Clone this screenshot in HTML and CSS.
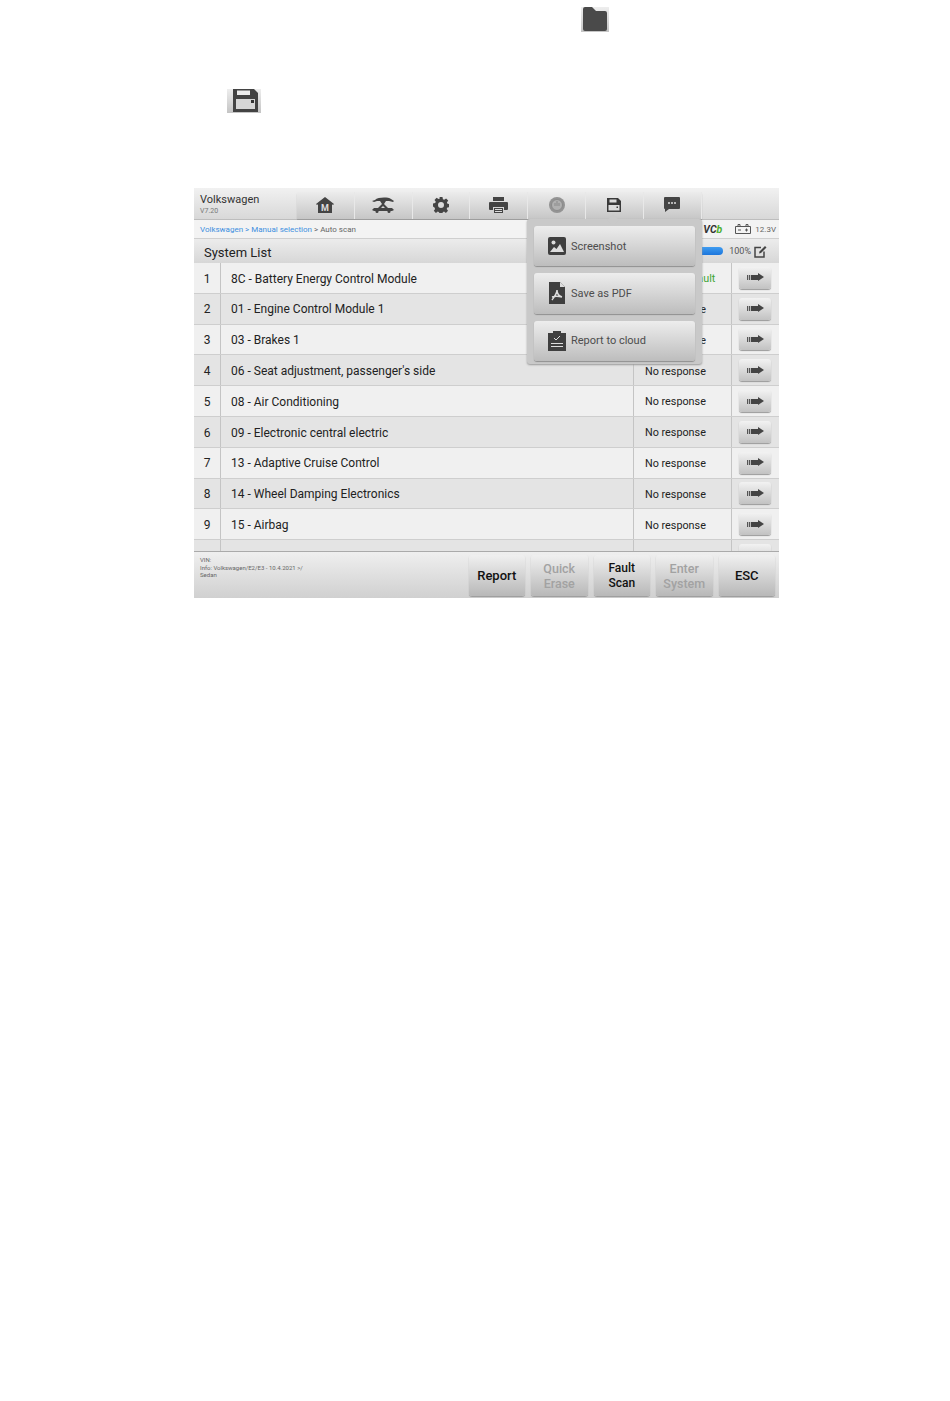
FILE: index.html
```html
<!DOCTYPE html>
<html lang="en-US">
  <head>
    <meta charset="UTF-8" />
    <meta name="viewport" content="width=device-width, initial-scale=1" />
    <title>System List</title>
    <link rel="stylesheet" href="styles.css">
  </head>
  <body>
    <!-- Icons from the manual text above the screenshot -->
    <div class="chip chip-folder">
      <svg viewBox="0 0 28 25" width="28" height="25"><path fill="#4a4a4a" d="M4 0h7l4 4h9a2 2 0 0 1 2 2v16a2 2 0 0 1-2 2H4a2 2 0 0 1-2-2V2a2 2 0 0 1 2-2z"/></svg>
    </div>
    <div class="chip chip-save">
      <svg viewBox="0 0 34 24" width="34" height="24"><path fill="#434343" d="M6 0h21l4 4v19H6z"/><rect x="10" y="1.500" width="13" height="4.500" fill="#ececec"/><rect x="9" y="10" width="19" height="10" fill="#d6d6d6"/><rect x="24" y="11" width="3" height="3" fill="#333"/></svg>
    </div>

    <div id="app">
      <div id="topbar">
        <div class="brand">
          <div class="brand-name">Volkswagen</div>
          <div class="brand-ver">V7.20</div>
        </div>
        <div class="tabs">
          <div class="tab">
            <svg viewBox="0 0 18 16" width="18" height="16"><path fill="#444" d="M9 0l9 7-1 1-1-.8V16H2V7.2L1 8 0 7z"/><text x="9" y="14" class="icon-m">M</text></svg>
          </div>
          <div class="tab">
            <svg viewBox="0 0 22 17" width="22" height="17"><path fill="#444" d="M3 4c3-3 13-3 16-1l3 2-1 1-4-1H5L2 6 0 5zM8 5h6l-2 3 4 4h-3l-2-2-2 2H6l4-4zM2 12h18l2 2-2 1H2l-2-1z"/><circle cx="5" cy="15.500" r="1.500" fill="#444"/><circle cx="17" cy="15.500" r="1.500" fill="#444"/></svg>
          </div>
          <div class="tab">
            <svg viewBox="0 0 16 16" width="16" height="16"><path fill="#444" fill-rule="evenodd" d="M6.500 0h3l.4 2.200 1.300.6 1.900-1.300 2.100 2.100-1.300 1.900.6 1.300 2 .4v3l-2.200.4-.6 1.300 1.300 1.900-2.100 2.100-1.900-1.300-1.300.6-.2 2.200h-3l-.4-2.200-1.300-.6-1.900 1.300-2.100-2.100 1.300-1.900-.6-1.300L0 9.500v-3l2.200-.4.6-1.300-1.300-1.900 2.100-2.100 1.900 1.300 1.300-.6zM8 5a3 3 0 1 0 0 6 3 3 0 0 0 0-6z"/></svg>
          </div>
          <div class="tab">
            <svg viewBox="0 0 19 16" width="19" height="16"><path fill="#444" d="M4 0h11v4H4zM1 5h17a1 1 0 0 1 1 1v6a1 1 0 0 1-1 1h-3v-3H4v3H1a1 1 0 0 1-1-1V6a1 1 0 0 1 1-1z"/><rect x="5" y="11" width="9" height="5" fill="#444"/><rect x="6" y="12" width="7" height="1" fill="#ddd"/><rect x="6" y="14" width="7" height="1" fill="#ddd"/></svg>
          </div>
          <div class="tab">
            <svg viewBox="0 0 16 16" width="16" height="16"><circle cx="8" cy="8" r="8" fill="#939393"/><circle cx="8" cy="8" r="5.500" fill="#b0b0b0" stroke="#8a8a8a"/><path d="M8 4v5M6 6v3M10 6v3" stroke="#8a8a8a" fill="none"/></svg>
          </div>
          <div class="tab">
            <svg viewBox="0 0 14 14" width="14" height="14"><path fill="#3a3a3a" d="M0 0h11l3 3v11H0z"/><rect x="2.500" y="1.500" width="7" height="3" fill="#ddd"/><rect x="1.500" y="7" width="11" height="5.500" fill="#ddd"/><rect x="9.500" y="8.500" width="1.500" height="1.500" fill="#3a3a3a"/></svg>
          </div>
          <div class="tab">
            <svg viewBox="0 0 16 15" width="16" height="15"><path fill="#444" d="M1 0h14a1 1 0 0 1 1 1v10a1 1 0 0 1-1 1H5l-4 3v-3a1 1 0 0 1-1-1V1a1 1 0 0 1 1-1z"/><circle cx="5" cy="6" r="1" fill="#ddd"/><circle cx="8" cy="6" r="1" fill="#ddd"/><circle cx="11" cy="6" r="1" fill="#ddd"/></svg>
          </div>
        </div>
      </div>

      <div id="crumbs">
        <div class="crumb-path"><span class="crumb-link">Volkswagen &gt; Manual selection</span> &gt; Auto scan</div>
        <div class="vci">
          <span class="vci-label">VC<span class="vci-b">b</span></span>
          <svg viewBox="0 0 16 10" width="16" height="10"><path fill="none" stroke="#555" d="M.5 2.500h15v7H.5zM3 2.500V.5h2v2M11 2.500V.5h2v2"/><path stroke="#555" d="M3 6h3M10 6h3M11.500 4.500v3"/></svg>
          <span>12.3V</span>
        </div>
      </div>

      <div id="list-head">
        <div class="list-title">System List</div>
        <div class="progress">
          <div class="progress-track"><div class="progress-fill"></div></div>
          <span>100%</span>
          <svg viewBox="0 0 13 13" width="13" height="13"><path fill="none" stroke="#444" stroke-width="1.500" d="M10 6.500V12H1V2.500h6"/><path fill="#444" d="M5 8.500l.5-2L11 1l1.500 1.500L7 8z"/></svg>
        </div>
      </div>

      <div id="list">
        <div class="row"><div class="num">1</div><div class="name">8C - Battery Energy Control Module</div><div class="status ok">Without a fault</div><div class="go"><button class="arrow-btn"><span class="arrow"></span></button></div></div>
        <div class="row"><div class="num">2</div><div class="name">01 - Engine Control Module 1</div><div class="status">No response</div><div class="go"><button class="arrow-btn"><span class="arrow"></span></button></div></div>
        <div class="row"><div class="num">3</div><div class="name">03 - Brakes 1</div><div class="status">No response</div><div class="go"><button class="arrow-btn"><span class="arrow"></span></button></div></div>
        <div class="row"><div class="num">4</div><div class="name">06 - Seat adjustment, passenger's side</div><div class="status">No response</div><div class="go"><button class="arrow-btn"><span class="arrow"></span></button></div></div>
        <div class="row"><div class="num">5</div><div class="name">08 - Air Conditioning</div><div class="status">No response</div><div class="go"><button class="arrow-btn"><span class="arrow"></span></button></div></div>
        <div class="row"><div class="num">6</div><div class="name">09 - Electronic central electric</div><div class="status">No response</div><div class="go"><button class="arrow-btn"><span class="arrow"></span></button></div></div>
        <div class="row"><div class="num">7</div><div class="name">13 - Adaptive Cruise Control</div><div class="status">No response</div><div class="go"><button class="arrow-btn"><span class="arrow"></span></button></div></div>
        <div class="row"><div class="num">8</div><div class="name">14 - Wheel Damping Electronics</div><div class="status">No response</div><div class="go"><button class="arrow-btn"><span class="arrow"></span></button></div></div>
        <div class="row"><div class="num">9</div><div class="name">15 - Airbag</div><div class="status">No response</div><div class="go"><button class="arrow-btn"><span class="arrow"></span></button></div></div>
        <div class="row"><div class="num"></div><div class="name"></div><div class="status"></div><div class="go"><button class="arrow-btn"></button></div></div>
      </div>

      <div id="footer">
        <div class="vin">VIN:<br>Info: Volkswagen/E2/E3 - 10.4.2021 &gt;/<br>Sedan</div>
        <div class="actions">
          <button class="action">Report</button>
          <button class="action off">Quick Erase</button>
          <button class="action tight">Fault Scan</button>
          <button class="action off">Enter System</button>
          <button class="action">ESC</button>
        </div>
      </div>

      <!-- Save menu opened from the toolbar -->
      <div id="save-menu">
        <div class="menu-tip"></div>
        <div class="menu-item">
          <svg viewBox="0 0 18 18" width="18" height="18"><rect width="18" height="18" rx="2" fill="#3f3f3f"/><circle cx="5.500" cy="5.500" r="2" fill="#ddd"/><path fill="#ddd" d="M2 15l4-5 2.500 2L12 7l4 8z"/></svg>
          <span>Screenshot</span>
        </div>
        <div class="menu-item">
          <svg viewBox="0 0 18 22" width="18" height="22"><path fill="#3f3f3f" d="M1 0h11l5 5v17H1z"/><path fill="#ddd" d="M12 0l5 5h-5z"/><path fill="none" stroke="#ddd" stroke-width="1.500" d="M9 8c0 4-3 7-5 10M9 8c0 4 2 6 5 7M4 15c3-1 6-1 10 0"/></svg>
          <span>Save as PDF</span>
        </div>
        <div class="menu-item">
          <svg viewBox="0 0 18 20" width="18" height="20"><path fill="#3f3f3f" d="M0 2h5V0h8v2h5v18H0z"/><path fill="none" stroke="#ddd" d="M6 7l2 2 4-4M3 12.500h12M3 15.500h12"/></svg>
          <span>Report to cloud</span>
        </div>
      </div>
    </div>
  </body>
</html>
```

FILE: styles.css
```css
body {
  margin: 0;
  padding: 0;
  background-color: #fff;
  color: #222;
  font-family: Roboto, "Liberation Sans", sans-serif;
}

button {
  font-family: inherit;
}

.chip {
  display: flex;
  background: linear-gradient(#eee, #c4c4c4);
}

.chip-folder {
  width: 28px;
  height: 25px;
  margin: 7px 0 0 581px;
}

.chip-save {
  width: 34px;
  height: 24px;
  margin: 57px 0 0 227px;
}

#app {
  position: relative;
  display: flex;
  flex-direction: column;
  width: 585px;
  height: 410px;
  margin: 75px 0 0 194px;
  background-color: #efefef;
}

/* Top bar */
#topbar {
  display: flex;
  height: 32px;
  background: linear-gradient(#f1f1f1, #d8d8d8);
  border-bottom: 1px solid #bdbdbd;
  box-sizing: border-box;
}

.brand {
  width: 103px;
  padding: 5px 0 0 6px;
  box-sizing: border-box;
}

.brand-name {
  font-size: 11px;
  line-height: 14px;
  color: #333;
}

.brand-ver {
  font-size: 7px;
  line-height: 9px;
  color: #777;
}

.tabs {
  display: flex;
  margin-top: 4px;
  height: 27px;
  box-shadow: 0 1px 1px #999;
  border-radius: 3px 3px 0 0;
}

.tab {
  display: flex;
  align-items: center;
  justify-content: center;
  width: 57.800px;
  padding-bottom: 2px;
  background: linear-gradient(#ececec, #c6c6c6);
  border-right: 1px solid #e8e8e8;
  box-sizing: border-box;
}

.icon-m {
  font-size: 9px;
  font-weight: bold;
  fill: #ddd;
  text-anchor: middle;
}

/* Breadcrumb row */
#crumbs {
  display: flex;
  align-items: center;
  justify-content: space-between;
  height: 19px;
  padding: 0 3px 0 6px;
  font-size: 8px;
  color: #666;
  background-color: #f3f3f3;
  border-bottom: 1px solid #cfcfcf;
  box-sizing: border-box;
}

.crumb-link {
  color: #3d8fe0;
}

.vci {
  display: flex;
  align-items: center;
  gap: 4px;
  font-size: 8px;
}

.vci-label {
  width: 21px;
  margin-right: 7px;
  font-size: 10.500px;
  font-weight: bold;
  font-style: italic;
  color: #333;
}

.vci-b {
  color: #4caf2f;
}

/* System list */
#list-head {
  display: flex;
  align-items: center;
  justify-content: space-between;
  height: 24px;
  padding: 2px 12px 0 10px;
  background: linear-gradient(#ececec, #d7d7d7);
  box-sizing: border-box;
}

.list-title {
  font-size: 13px;
  color: #222;
}

.progress {
  display: flex;
  align-items: center;
  gap: 3px;
  margin-top: -2px;
  font-size: 9px;
  color: #555;
}

.progress-track {
  width: 100px;
  margin-right: 3px;
}

.progress-fill {
  height: 8px;
  border-radius: 4px;
  background: linear-gradient(#3f9cf0, #1c76dc);
}

#list {
  flex: 1;
  overflow: hidden;
  border-bottom: 1px solid #aaa;
}

.row {
  display: grid;
  grid-template-columns: 27px 413px 98px 47px;
  height: 30.800px;
  box-sizing: border-box;
  border-bottom: 1px solid #cecece;
  background-color: #f0f0f0;
}

.row:nth-child(even) {
  background-color: #e4e4e4;
}

.num,
.name,
.status,
.go {
  display: flex;
  align-items: center;
}

.num {
  justify-content: center;
  padding-top: 1.600px;
  font-size: 12px;
  border-right: 1px solid #c4c4c4;
}

.name {
  padding: 1.600px 0 0 10px;
  font-size: 12px;
  border-right: 1px solid #c4c4c4;
}

.status {
  padding: 1.600px 0 0 11px;
  font-size: 10.800px;
  border-right: 1px solid #c4c4c4;
  white-space: nowrap;
}

.status.ok {
  color: #3fa535;
}

.go {
  padding-left: 7px;
}

.arrow-btn {
  display: flex;
  align-items: center;
  justify-content: center;
  width: 32px;
  height: 22px;
  padding: 0;
  border: 0;
  border-radius: 3px;
  background: linear-gradient(#f2f2f2, #c2c2c2);
  box-shadow: 0 1px 1px #999;
}

.arrow {
  position: relative;
  width: 11px;
  height: 5px;
  margin-right: 6px;
  background: linear-gradient(90deg, #555 0 1px, #bbb 1px 2px, #555 2px 3px, #bbb 3px 4px, #444 4px);
}

.arrow::after {
  content: "";
  position: absolute;
  left: 11px;
  top: -2px;
  border-left: 6px solid #444;
  border-top: 4.500px solid transparent;
  border-bottom: 4.500px solid transparent;
}

/* Footer */
#footer {
  display: flex;
  justify-content: space-between;
  height: 46px;
  background: linear-gradient(#efefef, #d0d0d0);
  box-sizing: border-box;
}

.vin {
  padding: 4px 0 0 6px;
  font-size: 6px;
  line-height: 7.700px;
  color: #666;
}

.actions {
  display: flex;
  gap: 6px;
  padding: 3px 4px 2px 0;
}

.action {
  width: 56.500px;
  padding: 0 6px;
  border: 0;
  border-radius: 3px;
  background: linear-gradient(#f0f0f0, #b8b8b8);
  box-shadow: 0 1px 1px #999;
  font-size: 13px;
  font-weight: 500;
  line-height: 15px;
  color: #111;
}

.action.off {
  font-size: 12.500px;
  color: #a2a2a2;
}

.action.tight {
  font-size: 12px;
}

/* Save menu */
#save-menu {
  position: absolute;
  left: 333px;
  top: 31px;
  display: flex;
  flex-direction: column;
  gap: 7px;
  width: 175px;
  height: 145px;
  padding: 7px 7px 3px;
  box-sizing: border-box;
  background-color: #c9c9c9;
  border-radius: 3px;
  box-shadow: 0 1px 2px #999;
}

.menu-tip {
  position: absolute;
  left: 82px;
  top: -3px;
  width: 8px;
  height: 8px;
  background-color: #c9c9c9;
  transform: rotate(45deg);
}

.menu-item {
  display: flex;
  align-items: center;
  gap: 5px;
  flex: 1;
  padding-left: 14px;
  background: linear-gradient(#ededed, #bdbdbd);
  border-radius: 3px;
  box-shadow: 0 1px 1px #8f8f8f;
  font-size: 11px;
  color: #4d4d4d;
}
```
